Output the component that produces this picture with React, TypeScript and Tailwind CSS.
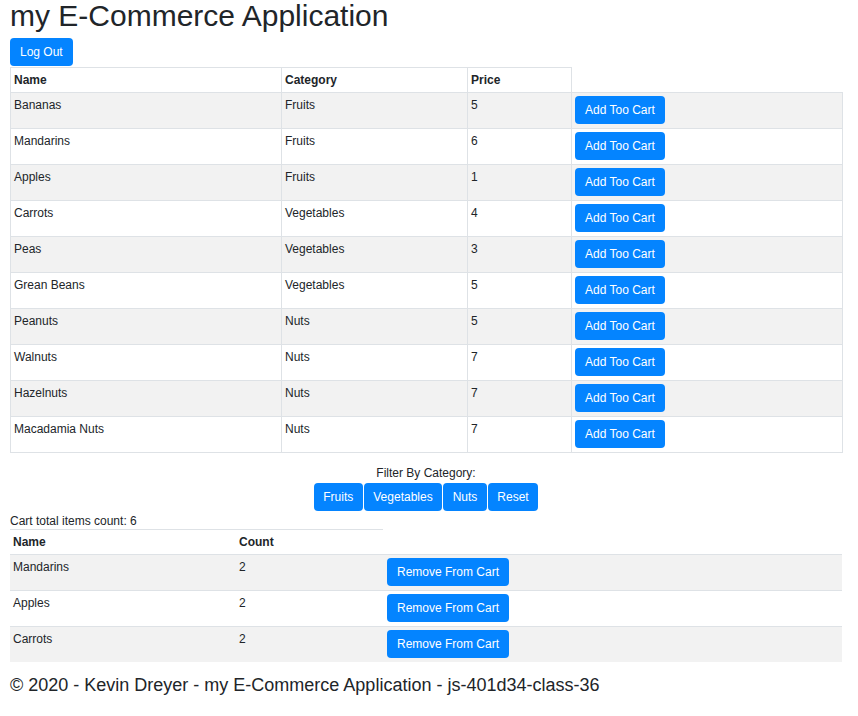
import React from "react";

type Product = { name: string; category: string; price: number };

const products: Product[] = [
  { name: "Bananas", category: "Fruits", price: 5 },
  { name: "Mandarins", category: "Fruits", price: 6 },
  { name: "Apples", category: "Fruits", price: 1 },
  { name: "Carrots", category: "Vegetables", price: 4 },
  { name: "Peas", category: "Vegetables", price: 3 },
  { name: "Grean Beans", category: "Vegetables", price: 5 },
  { name: "Peanuts", category: "Nuts", price: 5 },
  { name: "Walnuts", category: "Nuts", price: 7 },
  { name: "Hazelnuts", category: "Nuts", price: 7 },
  { name: "Macadamia Nuts", category: "Nuts", price: 7 },
];

const cart = [
  { name: "Mandarins", count: 2 },
  { name: "Apples", count: 2 },
  { name: "Carrots", count: 2 },
];

const categories = ["Fruits", "Vegetables", "Nuts", "Reset"];

function BlueButton({
  children,
  className = "",
  pad = "px-[10px]",
}: {
  children: React.ReactNode;
  className?: string;
  pad?: string;
}) {
  return (
    <button
      className={`h-[28px] ${pad} rounded-[4px] bg-[#0484ff] text-white text-[12px] leading-[28px] whitespace-nowrap ${className}`}
    >
      {children}
    </button>
  );
}

export default function App() {
  return (
    <div
      className="w-[858px] min-h-[716px] bg-white text-[#212529]"
      style={{ fontFamily: '"Liberation Sans", Arial, sans-serif' }}
    >
      <div className="w-[832px] ml-[10px]">
        {/* Header */}
        <h1 className="text-[30px] leading-[32px] font-normal m-0">my E-Commerce Application</h1>
        <BlueButton className="mt-[6px] block">Log Out</BlueButton>

        {/* Products table */}
        <table className="mt-[1px] w-[832px] table-fixed border-collapse text-[12px]">
          <colgroup>
            <col className="w-[271px]" />
            <col className="w-[186px]" />
            <col className="w-[104px]" />
            <col className="w-[271px]" />
          </colgroup>
          <thead>
            <tr>
              <th className="border border-[#dee2e6] py-[4px] pl-[3px] pr-[4px] text-left font-bold leading-[16px]">Name</th>
              <th className="border border-[#dee2e6] py-[4px] pl-[3px] pr-[4px] text-left font-bold leading-[16px]">Category</th>
              <th className="border border-[#dee2e6] py-[4px] pl-[3px] pr-[4px] text-left font-bold leading-[16px]">Price</th>
            </tr>
          </thead>
          <tbody>
            {products.map((p, i) => (
              <tr key={p.name} className={i % 2 === 0 ? "bg-[#f2f2f2]" : "bg-white"}>
                <td className="border border-[#dee2e6] pt-[3px] pb-[4px] pl-[3px] pr-[4px] align-top leading-[18px]">{p.name}</td>
                <td className="border border-[#dee2e6] pt-[3px] pb-[4px] pl-[3px] pr-[4px] align-top leading-[18px]">{p.category}</td>
                <td className="border border-[#dee2e6] pt-[3px] pb-[4px] pl-[3px] pr-[4px] align-top leading-[18px]">{p.price}</td>
                <td className="border border-[#dee2e6] pt-[3px] pb-[4px] pl-[3px] pr-[4px] align-top">
                  <BlueButton className="block">Add Too Cart</BlueButton>
                </td>
              </tr>
            ))}
          </tbody>
        </table>

        {/* Filter */}
        <div className="mt-[12px] flex flex-col items-center">
          <div className="text-[12px] leading-[16px]">Filter By Category:</div>
          <div className="mt-[2px] flex gap-[1px]">
            {categories.map((c) => (
              <BlueButton key={c} pad="px-[9.5px]">
                {c}
              </BlueButton>
            ))}
          </div>
        </div>

        {/* Cart */}
        <div className="mt-[2px] text-[12px] leading-[16px]">Cart total items count: 6</div>
        <table className="w-[832px] table-fixed border-collapse text-[12px]">
          <colgroup>
            <col className="w-[226px]" />
            <col className="w-[147px]" />
            <col className="w-[459px]" />
          </colgroup>
          <thead>
            <tr>
              <th className="border-t border-[#dee2e6] p-[4px] pl-[3px] text-left font-bold leading-[16px]">Name</th>
              <th className="border-t border-[#dee2e6] p-[4px] pl-[3px] text-left font-bold leading-[16px]">Count</th>
            </tr>
          </thead>
          <tbody>
            {cart.map((c, i) => (
              <tr key={c.name} className={i % 2 === 0 ? "bg-[#f2f2f2]" : "bg-white"}>
                <td className="border-t border-[#dee2e6] pt-[3px] pb-[4px] pl-[3px] pr-[4px] align-top leading-[18px]">{c.name}</td>
                <td className="border-t border-[#dee2e6] pt-[3px] pb-[4px] pl-[3px] pr-[4px] align-top leading-[18px]">{c.count}</td>
                <td className="border-t border-[#dee2e6] pt-[3px] pb-[4px] px-[4px] align-top">
                  <BlueButton className="block">Remove From Cart</BlueButton>
                </td>
              </tr>
            ))}
          </tbody>
        </table>

        {/* Footer */}
        <footer className="mt-[10px] text-[18px] leading-[27px]">
          © 2020 - Kevin Dreyer - my E-Commerce Application - js-401d34-class-36
        </footer>
      </div>
    </div>
  );
}
